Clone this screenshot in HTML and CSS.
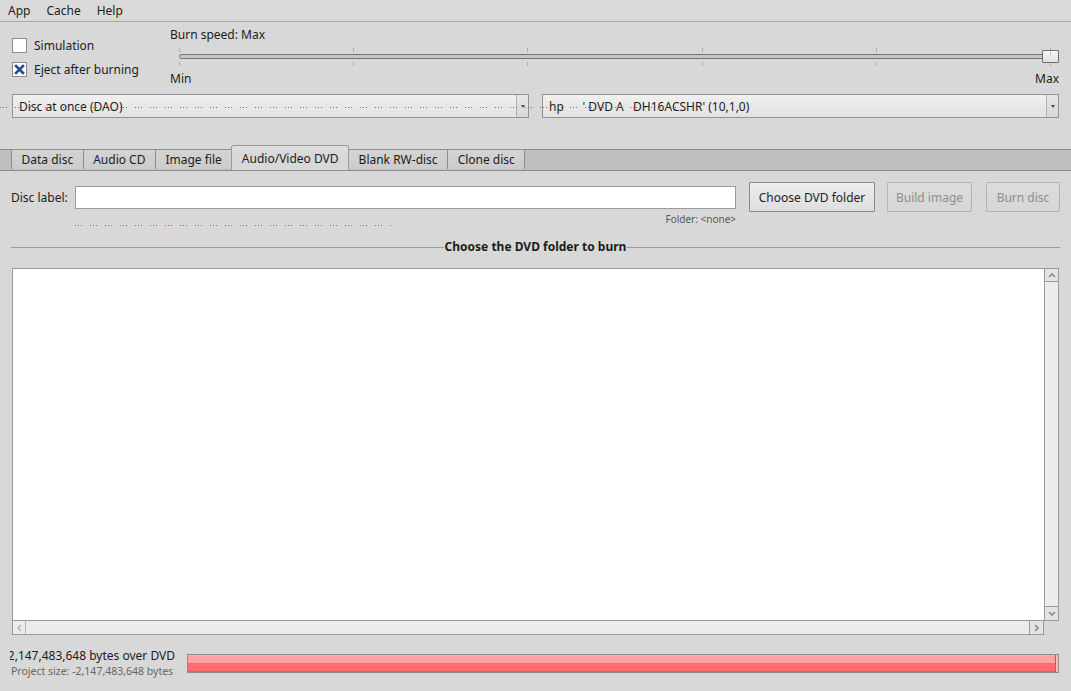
FILE: index.html
```html
<!DOCTYPE html>
<html lang="en">

<head>
    <meta charset="UTF-8">
    <meta name="viewport" content="width=device-width, initial-scale=1.0">
    <title>Disc burner</title>
    <link rel="stylesheet" href="styles.css">
</head>

<body>

    <nav class="menubar">
        <span>App</span>
        <span>Cache</span>
        <span>Help</span>
    </nav>

    <section class="options">
        <div class="checks">
            <label class="check"><span class="box"></span>Simulation</label>
            <label class="check">
                <span class="box">
                    <svg width="13" height="13" viewBox="0 0 13 13">
                        <path d="M3 3 L10 10 M10 3 L3 10" stroke="#1f4f8f" stroke-width="2.6" stroke-linecap="square" fill="none"/>
                    </svg>
                </span>
                Eject after burning
            </label>
        </div>

        <div class="speed">
            <div class="speed-title">Burn speed: Max</div>
            <div class="slider">
                <div class="ticks"><i></i><i></i><i></i><i></i><i></i><i></i></div>
                <div class="groove"></div>
                <div class="ticks below"><i></i><i></i><i></i><i></i><i></i><i></i></div>
                <div class="handle"></div>
            </div>
            <div class="speed-range"><span>Min</span><span>Max</span></div>
        </div>
    </section>

    <section class="combos">
        <div class="combo"><span>Disc at once (DAO)</span><b class="arrow"></b></div>
        <div class="combo"><span class="pre">hp      ' DVD A   DH16ACSHR' (10,1,0)</span><b class="arrow"></b></div>
    </section>
    <svg class="spell spell-drive" width="678" height="2" viewBox="0 0 678 2">
        <rect width="678" height="1" fill="url(#dots)"/>
        <defs>
            <pattern id="dots" width="15" height="1" patternUnits="userSpaceOnUse">
                <rect x="0" width="1" height="1" fill="#f03c3c"/>
                <rect x="3" width="1" height="1" fill="#f03c3c"/>
                <rect x="6" width="1" height="1" fill="#f03c3c"/>
            </pattern>
        </defs>
    </svg>

    <div class="tabbar">
        <span class="tab">Data disc</span>
        <span class="tab">Audio CD</span>
        <span class="tab">Image file</span>
        <span class="tab active">Audio/Video DVD</span>
        <span class="tab">Blank RW-disc</span>
        <span class="tab">Clone disc</span>
    </div>

    <main class="page">
        <div class="label-row">
            <label class="label" for="discLabel">Disc label:</label>
            <input class="field" id="discLabel" type="text">
            <button class="btn btn-choose" type="button">Choose DVD folder</button>
            <button class="btn btn-build" type="button" disabled>Build image</button>
            <button class="btn btn-burn" type="button" disabled>Burn disc</button>
        </div>
        <div class="note">Folder: &lt;none&gt;</div>
        <svg class="spell spell-label" width="316" height="2" viewBox="0 0 316 2">
            <rect width="316" height="1" fill="url(#dots)"/>
        </svg>

        <div class="section-title">Choose the DVD folder to burn</div>

        <div class="list">
            <div class="view"></div>
            <div class="vbar">
                <span class="sb-btn up">
                    <svg width="8" height="6" viewBox="0 0 8 6"><path d="M1 5 L4 2 L7 5" stroke="#8c8c8c" stroke-width="1.7" fill="none"/></svg>
                </span>
                <span class="sb-btn down">
                    <svg width="8" height="6" viewBox="0 0 8 6"><path d="M1 1 L4 4 L7 1" stroke="#8c8c8c" stroke-width="1.7" fill="none"/></svg>
                </span>
            </div>
            <div class="hbar">
                <span class="sb-btn left">
                    <svg width="6" height="8" viewBox="0 0 6 8"><path d="M5 1 L2 4 L5 7" stroke="#b4b4b4" stroke-width="1.5" fill="none"/></svg>
                </span>
                <span class="sb-btn right">
                    <svg width="6" height="8" viewBox="0 0 6 8"><path d="M1 1 L4 4 L1 7" stroke="#8c8c8c" stroke-width="1.7" fill="none"/></svg>
                </span>
            </div>
        </div>

        <footer class="footer">
            <div class="sizes">
                <div class="over"><span>-2,147,483,648 bytes over DVD</span></div>
                <div class="project">Project size: -2,147,483,648 bytes</div>
            </div>
            <div class="progress"><div class="progress-fill"></div></div>
        </footer>
    </main>

</body>

</html>
```

FILE: styles.css
```css
* {
    box-sizing: border-box;
}

body {
    margin: 0;
    height: 691px;
    overflow: hidden;
    position: relative;
    background-color: #d8d8d8;
    color: #1c1c1c;
    font-family: "Noto Sans", sans-serif;
    font-size: 12px;
}

/* menu */

.menubar {
    display: flex;
    height: 22px;
    background-color: #dadada;
    border-bottom: 1px solid #a9a9a9;
}

.menubar span {
    padding: 0 8px;
    line-height: 21px;
}

/* options */

.options {
    display: flex;
    height: 64px;
}

.checks {
    width: 170px;
    padding: 11px 0 0 12px;
}

.check {
    display: flex;
    align-items: center;
    gap: 7px;
    height: 24px;
}

.box {
    display: flex;
    align-items: center;
    justify-content: center;
    width: 15px;
    height: 15px;
    background-color: #fff;
    border: 1px solid #8c8c8c;
}

.speed {
    flex: 1;
    padding: 5px 12px 0 0;
}

.speed-title {
    line-height: 16px;
}

.slider {
    position: relative;
    height: 26px;
    margin: 0 1px 0 9px;
    padding-top: 5px;
}

.ticks {
    display: flex;
    justify-content: space-between;
    width: 872px;
    height: 4px;
}

.ticks.below {
    margin-top: 3px;
}

.ticks i {
    width: 1px;
    background-color: #ababab;
}

.groove {
    height: 5px;
    margin-top: 2px;
    border: 1px solid #747474;
    border-radius: 3px;
    background-color: #c6c6c6;
}

.handle {
    position: absolute;
    left: 863px;
    top: 7px;
    width: 17px;
    height: 13px;
    border: 1px solid #6e6e6e;
    border-radius: 1px;
    background: linear-gradient(#f6f6f6, #e0e0e0);
}

.handle::after {
    content: "";
    position: absolute;
    left: 7px;
    top: 1px;
    width: 1px;
    height: 4px;
    background-color: #c4c4c4;
}

.speed-range {
    display: flex;
    justify-content: space-between;
    margin-top: 2px;
    line-height: 16px;
}

/* combos */

.combos {
    display: flex;
    gap: 13px;
    margin-top: 8px;
    padding: 0 12px;
}

.combo {
    flex: 1;
    display: flex;
    align-items: center;
    height: 24px;
    padding-left: 6px;
    border: 1px solid #939393;
    background: linear-gradient(#f0f0f0, #e2e2e2);
}

.pre {
    white-space: pre;
}

.arrow {
    display: flex;
    align-items: center;
    justify-content: center;
    align-self: stretch;
    width: 12px;
    margin-left: auto;
    border-left: 1px solid #b2b2b2;
    background: linear-gradient(#e6e6e6, #d8d8d8);
}

.arrow::before {
    content: "";
    border-top: 3px solid #4a4a4a;
    border-left: 2px solid transparent;
    border-right: 2px solid transparent;
}

/* red dotted marks */

.spell {
    position: absolute;
    display: block;
    shape-rendering: crispEdges;
}

.spell-drive {
    top: 107px;
    left: 0;
}

.spell-label {
    top: 43px;
    left: 75px;
}

/* tabs */

.tabbar {
    display: flex;
    align-items: flex-start;
    margin-top: 27px;
    padding: 4px 0 0 11px;
    border-bottom: 1px solid #8e8e8e;
    background: linear-gradient(#d8d8d8 4px, #8e8e8e 4px 5px, #bfbfbf 5px);
}

.tab {
    height: 20px;
    padding: 0 9.5px;
    line-height: 19px;
    border: 1px solid #8e8e8e;
    border-bottom: none;
    margin-left: -1px;
    background: linear-gradient(#d4d4d4, #cbcbcb);
}

.tab:first-child {
    margin-left: 0;
}

.tab.active {
    position: relative;
    height: 25px;
    margin-top: -4px;
    line-height: 25px;
    border-color: #9a9a9a;
    border-radius: 3px 3px 0 0;
    background: linear-gradient(#e0e0e0, #d8d8d8 8px);
}

/* page */

.page {
    position: relative;
    padding: 0 11px;
}

.label-row {
    display: flex;
    align-items: center;
    height: 30px;
    margin-top: 11px;
}

.label {
    width: 64px;
}

.field {
    flex: 1;
    height: 23px;
    margin: 0;
    border: 1px solid #9a9a9a;
    background-color: #fff;
    outline: none;
}

.btn {
    height: 30px;
    padding: 0;
    border: 1px solid #8a8a8a;
    border-radius: 1px;
    background: linear-gradient(#eeeeee, #dedede);
    color: #1c1c1c;
    font-family: inherit;
    font-size: 12px;
}

.btn:disabled {
    border-color: #b4b4b4;
    background: linear-gradient(#dcdcdc, #d6d6d6);
    color: #8e8e8e;
}

.btn-choose {
    width: 126px;
    margin-left: 13px;
}

.btn-build {
    width: 85px;
    margin-left: 12px;
}

.btn-burn {
    width: 74px;
    margin-left: 14px;
}

.note {
    margin-right: 324px;
    text-align: right;
    font-size: 10px;
    line-height: 14px;
    color: #595959;
}

.section-title {
    display: flex;
    align-items: center;
    gap: 1px;
    height: 14px;
    margin-top: 14px;
    font-weight: bold;
    line-height: 14px;
}

.section-title::before,
.section-title::after {
    content: "";
    flex: 1;
    height: 1px;
    background-color: #9c9c9c;
}

/* folder list */

.list {
    display: grid;
    grid-template-columns: 1fr 15px;
    grid-template-rows: 1fr 14px;
    height: 367px;
    margin: 14px 1px 0;
}

.view {
    background-color: #fff;
    border: 1px solid #9a9a9a;
    border-right: none;
}

.vbar {
    display: flex;
    flex-direction: column;
    justify-content: space-between;
    border: 1px solid #9a9a9a;
    background-color: #ececec;
}

.hbar {
    display: flex;
    justify-content: space-between;
    border: 1px solid #9a9a9a;
    border-top: none;
    background-color: #ececec;
}

.sb-btn {
    display: flex;
    align-items: center;
    justify-content: center;
    background-color: #e4e4e4;
}

.sb-btn.up {
    height: 13px;
    border-bottom: 1px solid #9a9a9a;
}

.sb-btn.down {
    height: 14px;
    border-top: 1px solid #9a9a9a;
}

.sb-btn.left {
    width: 13px;
    background-color: #ececec;
    border-right: 1px solid #b8b8b8;
}

.sb-btn.right {
    width: 14px;
    border-left: 1px solid #9a9a9a;
}

/* footer */

.footer {
    display: flex;
    margin-top: 13px;
}

.sizes {
    width: 165px;
    margin-left: -1px;
}

.over {
    display: flex;
    justify-content: flex-end;
    overflow: hidden;
    white-space: nowrap;
    line-height: 16px;
}

.project {
    padding-left: 1px;
    font-size: 10.5px;
    line-height: 15px;
    color: #666;
    white-space: nowrap;
}

.progress {
    flex: 1;
    height: 19px;
    margin: 6px 1px 0 12px;
    border: 1px solid #8c8c8c;
    background-color: #ffbcbc;
}

.progress-fill {
    width: calc(100% - 2px);
    height: 100%;
    border-right: 1px solid #c45a5a;
    background: linear-gradient(#ffb0b0 0 1px, #ffa2a2 1px 45%, #ff6c6c 45% calc(100% - 1px), #e65c5c calc(100% - 1px));
}
```
